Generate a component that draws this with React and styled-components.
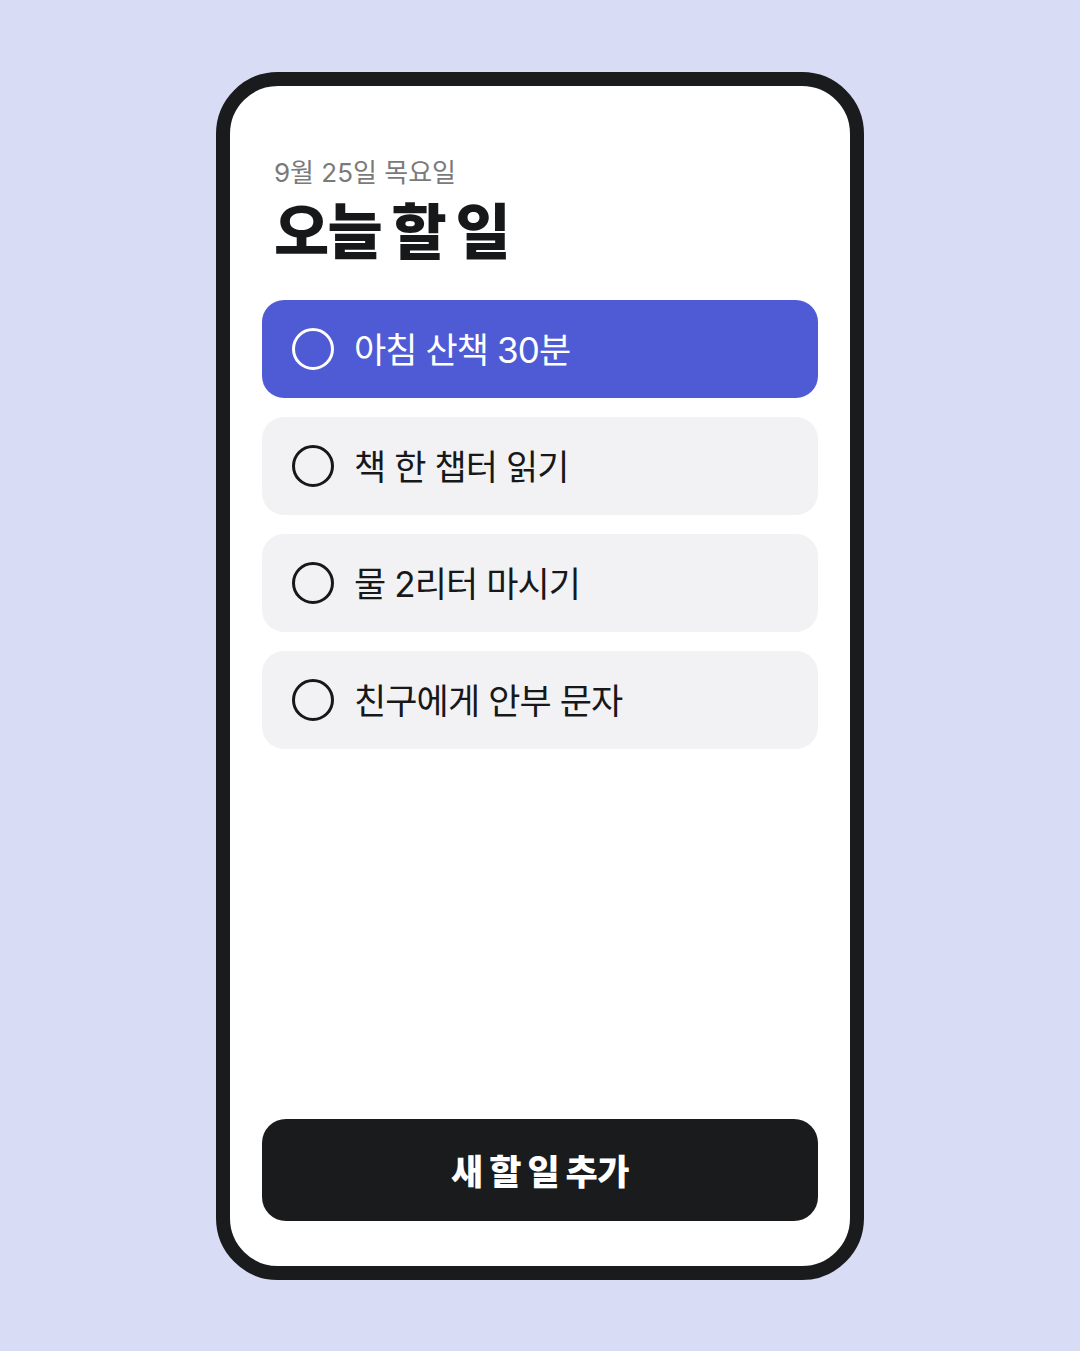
import styled, { createGlobalStyle } from "styled-components";

const GlobalStyle = createGlobalStyle`
  html, body {
    margin: 0;
    padding: 0;
    background: #d9dcf5;
  }
  body {
    font-family: Inter, "Noto Sans CJK KR", "Noto Sans", sans-serif;
  }
`;

const Page = styled.div`
  width: 1080px;
  height: 1351px;
  display: flex;
  align-items: center;
  justify-content: center;
  background: #d9dcf5;
`;

const Phone = styled.div`
  box-sizing: border-box;
  width: 648px;
  height: 1208px;
  border: 14px solid #1a1b1d;
  border-radius: 62px;
  background: #ffffff;
  display: flex;
  flex-direction: column;
  padding: 70px 32px 45px;
`;

const Header = styled.header`
  padding: 0 12px;
`;

const DateText = styled.div`
  color: #7a7a7a;
  font-size: 26px;
  line-height: 34px;
  letter-spacing: 0;
`;

const Title = styled.h1`
  margin: 9px 0 0;
  color: #17181a;
  font-size: 60px;
  line-height: 66px;
  font-weight: 900;
  letter-spacing: -1.6px;
`;

const List = styled.div`
  display: flex;
  flex-direction: column;
  gap: 19px;
  margin-top: 35px;
`;

const Item = styled.div`
  height: 98px;
  border-radius: 22px;
  background: ${(p) => (p.$active ? "#4f5bd5" : "#f2f2f4")};
  color: ${(p) => (p.$active ? "#ffffff" : "#17181a")};
  display: flex;
  align-items: center;
  padding: 0 30px;
  gap: 20px;
`;

const Check = styled.span`
  width: 36px;
  height: 36px;
  border-radius: 50%;
  border: 3px solid ${(p) => (p.$active ? "#ffffff" : "#17181a")};
  flex-shrink: 0;
`;

const ItemText = styled.span`
  font-size: 35px;
  line-height: 1;
  letter-spacing: -0.9px;
  padding-top: 3px;
`;

const AddButton = styled.button`
  margin-top: auto;
  height: 102px;
  border: none;
  border-radius: 24px;
  background: #1a1b1d;
  color: #ffffff;
  font-family: inherit;
  font-size: 35px;
  font-weight: 900;
  letter-spacing: -0.5px;
  cursor: pointer;
`;

const todos = [
  { text: "아침 산책 30분", active: true },
  { text: "책 한 챕터 읽기" },
  { text: "물 2리터 마시기" },
  { text: "친구에게 안부 문자" },
];

export default function App() {
  return (
    <>
      <GlobalStyle />
      <Page>
        <Phone>
          <Header>
            <DateText>9월 25일 목요일</DateText>
            <Title>오늘 할 일</Title>
          </Header>
          <List>
            {todos.map((t) => (
              <Item key={t.text} $active={t.active}>
                <Check $active={t.active} />
                <ItemText>{t.text}</ItemText>
              </Item>
            ))}
          </List>
          <AddButton>새 할 일 추가</AddButton>
        </Phone>
      </Page>
    </>
  );
}
